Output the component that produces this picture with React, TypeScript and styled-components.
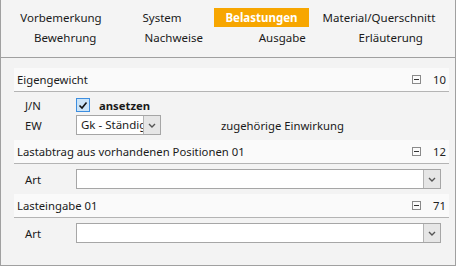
import React from 'react';
import styled, { createGlobalStyle } from 'styled-components';

const GlobalStyle = createGlobalStyle`
  html, body {
    margin: 0;
    padding: 0;
    background: #f3f3f3;
  }
  body {
    font-family: "Noto Sans", "Open Sans", Arial, sans-serif;
    font-size: 11.3px;
    color: #1a1a1a;
  }
`;

const Frame = styled.div`
  width: 456px;
  height: 266px;
  box-sizing: border-box;
  border: 1px solid #a0a0a0;
  border-top: none;
  background: #f3f3f3;
  overflow: hidden;
`;

const TabBar = styled.div`
  height: 58px;
  box-sizing: border-box;
  padding-top: 8px;
  border-bottom: 1px solid #a0a0a0;
  background: #f4f4f4;
`;

const TabRow = styled.div<{ $offset: number }>`
  display: flex;
  height: 19px;
  margin-bottom: 1px;
  padding-left: ${(p) => p.$offset - 1}px;
`;

const Tab = styled.div<{ $width: number; $active?: boolean }>`
  width: ${(p) => p.$width}px;
  flex: none;
  display: flex;
  align-items: center;
  justify-content: center;
  font-size: 11.5px;
  font-weight: ${(p) => (p.$active ? 700 : 400)};
  color: ${(p) => (p.$active ? '#ffffff' : '#1a1a1a')};
  background: ${(p) => (p.$active ? '#f7a600' : 'transparent')};
  white-space: nowrap;
  cursor: pointer;
`;

const Content = styled.div`
  padding: 10px 6px 0 13px;
`;

const SectionHeader = styled.div`
  height: 23px;
  display: flex;
  align-items: center;
  padding: 0 3px;
  background: #fafafa;
  border-bottom: 1px solid #b4b4b4;
`;

const HeaderTitle = styled.span`
  flex: 1;
`;

const CollapseBox = styled.span`
  width: 7px;
  height: 7px;
  border: 1px solid #8a8a8a;
  position: relative;
  margin-right: 12px;
  &::after {
    content: '';
    position: absolute;
    left: 1px;
    right: 1px;
    top: 3px;
    height: 1px;
    background: #333;
  }
`;

const HeaderNumber = styled.span`
  min-width: 12px;
  text-align: right;
  color: #222;
`;

const SectionBody = styled.div<{ $top: number }>`
  padding: ${(p) => p.$top}px 8px 5px 11px;
`;

const Row = styled.div`
  display: flex;
  align-items: center;
  height: 20px;
`;

const Label = styled.span`
  width: 51px;
  flex: none;
`;

const CheckBox = styled.span`
  width: 12px;
  height: 12px;
  border: 1px solid #3d8ee0;
  background: #cce4f7;
  display: flex;
  align-items: center;
  justify-content: center;
  margin-right: 9px;
`;

const Strong = styled.span`
  font-weight: 700;
`;

const Select = styled.div<{ $width?: number }>`
  height: 20px;
  box-sizing: border-box;
  border: 1px solid #a6a6a6;
  background: #ffffff;
  display: flex;
  ${(p) => (p.$width ? `width: ${p.$width}px;` : 'flex: 1;')}
`;

const SelectValue = styled.span`
  flex: 1;
  overflow: hidden;
  white-space: nowrap;
  padding-left: 4px;
  line-height: 18px;
  font-size: 11.5px;
`;

const SelectButton = styled.span`
  width: 16px;
  flex: none;
  border-left: 1px solid #b4b4b4;
  background: #e6e6e6;
  display: flex;
  align-items: center;
  justify-content: center;
`;

const Hint = styled.span`
  margin-left: 60px;
`;

const Chevron = () => (
  <svg width="8" height="5" viewBox="0 0 8 5">
    <path d="M1 1 L4 4 L7 1" fill="none" stroke="#555" strokeWidth="1.4" />
  </svg>
);

const Check = () => (
  <svg width="10" height="9" viewBox="0 0 10 9">
    <path d="M1.5 4.5 L4 7 L8.5 1.5" fill="none" stroke="#111" strokeWidth="1.6" />
  </svg>
);

const tabsTop = [
  { label: 'Vorbemerkung', width: 98 },
  { label: 'System', width: 104 },
  { label: 'Belastungen', width: 95, active: true },
  { label: 'Material/Querschnitt', width: 140 },
];

const tabsBottom = ['Bewehrung', 'Nachweise', 'Ausgabe', 'Erläuterung'];

const Header = ({ title, num }: { title: string; num: string }) => (
  <SectionHeader>
    <HeaderTitle>{title}</HeaderTitle>
    <CollapseBox />
    <HeaderNumber>{num}</HeaderNumber>
  </SectionHeader>
);

export default function App() {
  return (
    <>
      <GlobalStyle />
      <Frame>
        <TabBar>
          <TabRow $offset={12}>
            {tabsTop.map((t) => (
              <Tab key={t.label} $width={t.width} $active={t.active}>
                {t.label}
              </Tab>
            ))}
          </TabRow>
          <TabRow $offset={11}>
            {tabsBottom.map((t) => (
              <Tab key={t} $width={108.5}>
                {t}
              </Tab>
            ))}
          </TabRow>
        </TabBar>

        <Content>
          <Header title="Eigengewicht" num="10" />
          <SectionBody $top={3}>
            <Row>
              <Label>J/N</Label>
              <CheckBox>
                <Check />
              </CheckBox>
              <Strong>ansetzen</Strong>
            </Row>
            <Row>
              <Label>EW</Label>
              <Select $width={85}>
                <SelectValue>Gk - Ständig</SelectValue>
                <SelectButton>
                  <Chevron />
                </SelectButton>
              </Select>
              <Hint>zugehörige Einwirkung</Hint>
            </Row>
          </SectionBody>

          <Header title="Lastabtrag aus vorhandenen Positionen 01" num="12" />
          <SectionBody $top={5}>
            <Row>
              <Label>Art</Label>
              <Select>
                <SelectValue />
                <SelectButton>
                  <Chevron />
                </SelectButton>
              </Select>
            </Row>
          </SectionBody>

          <Header title="Lasteingabe 01" num="71" />
          <SectionBody $top={5}>
            <Row>
              <Label>Art</Label>
              <Select>
                <SelectValue />
                <SelectButton>
                  <Chevron />
                </SelectButton>
              </Select>
            </Row>
          </SectionBody>
        </Content>
      </Frame>
    </>
  );
}
